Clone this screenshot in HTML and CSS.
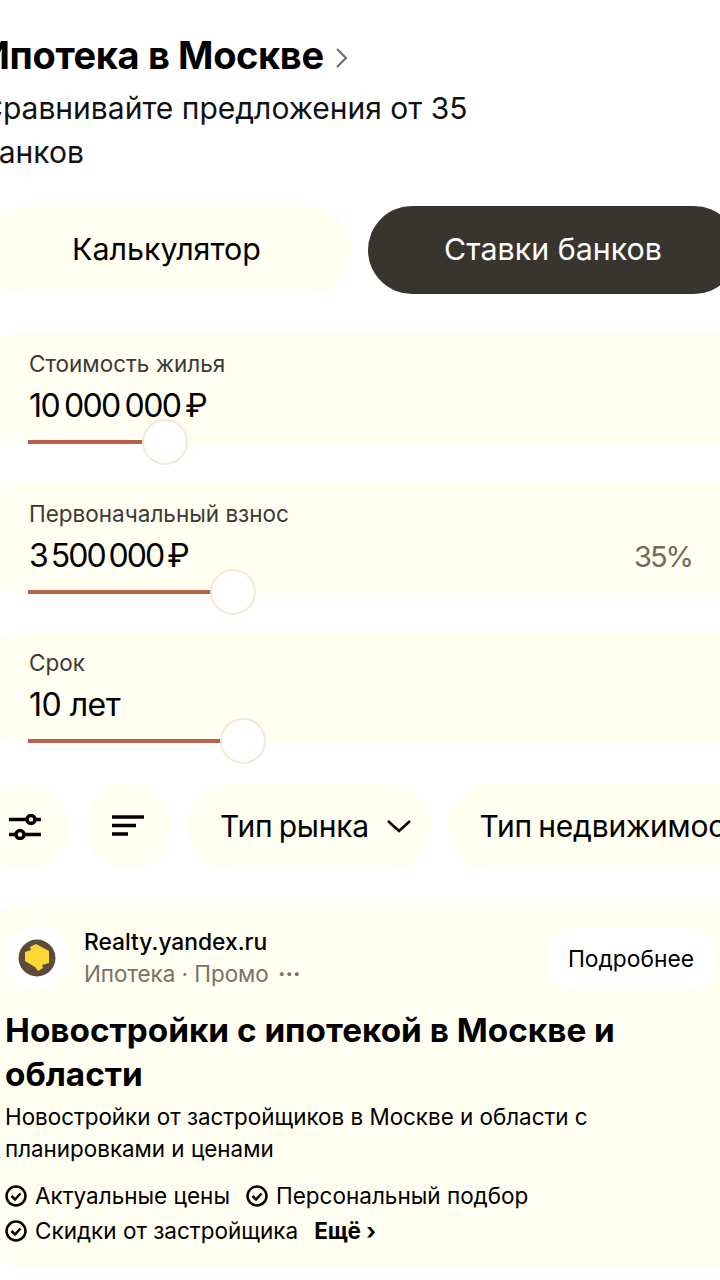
FILE: index.html
```html
<!DOCTYPE html>
<html lang="ru">
<head>
<meta charset="utf-8">
<title>Ипотека в Москве</title>
<link rel="stylesheet" href="styles.css">
</head>
<body>
<main class="page">
  <header class="head">
    <h1 class="title">Ипотека в Москве <svg class="title-arrow" width="14" height="22" viewBox="0 0 14 22"><path d="M2 2l9 9-9 9" fill="none" stroke="#6b6b66" stroke-width="2"/></svg></h1>
    <p class="sub">Сравнивайте предложения от 35<br>банков</p>
  </header>
  <div class="tabs">
    <div class="tab tab-light">Калькулятор</div>
    <div class="tab tab-dark">Ставки банков</div>
  </div>
  <section class="field">
    <div class="field-label">Стоимость жилья</div>
    <div class="field-value"><span class="num">10 000 000 ₽</span></div>
    <div class="slider"><div class="track t1"></div><div class="thumb"></div></div>
  </section>
  <section class="field">
    <div class="field-label">Первоначальный взнос</div>
    <div class="field-value"><span class="num num-tight">3 500 000 ₽</span><span class="pct">35%</span></div>
    <div class="slider"><div class="track t2"></div><div class="thumb"></div></div>
  </section>
  <section class="field">
    <div class="field-label">Срок</div>
    <div class="field-value"><span>10 лет</span></div>
    <div class="slider"><div class="track t3"></div><div class="thumb"></div></div>
  </section>
  <div class="chips">
    <div class="chip chip-round">
      <svg width="32" height="26" viewBox="0 0 32 26"><path d="M0 5.500h32M0 20.500h32" fill="none" stroke="#000" stroke-width="3.500"/><circle cx="22" cy="5.500" r="4" fill="#fffef0" stroke="#000" stroke-width="3.500"/><circle cx="11" cy="20.500" r="4" fill="#fffef0" stroke="#000" stroke-width="3.500"/></svg>
    </div>
    <div class="chip chip-round">
      <svg class="sort" width="32" height="21" viewBox="0 0 32 21"><path d="M0 2h32M0 10.500h24M0 19h16" fill="none" stroke="#000" stroke-width="3.500"/></svg>
    </div>
    <div class="chip chip-market">Тип рынка <svg class="chev" width="26" height="16" viewBox="0 0 26 16"><path d="M2 3l11 10L24 3" fill="none" stroke="#000" stroke-width="2.500"/></svg></div>
    <div class="chip">Тип недвижимости</div>
  </div>
  <article class="ad">
    <div class="ad-top">
      <div class="logo">
        <svg width="38" height="38" viewBox="0 0 38 38"><circle cx="19" cy="19" r="18.500" fill="#5d4a3a"/><path d="M18 5l13 7v12l-7 2 1 3-5 3-3-4-10-6V13l6-2-1-3z" fill="#fdd835"/></svg>
      </div>
      <div class="ad-src">
        <div class="ad-name">Realty.yandex.ru</div>
        <div class="ad-meta">Ипотека · Промо <span class="dots">···</span></div>
      </div>
      <div class="ad-more">Подробнее</div>
    </div>
    <h2 class="ad-title">Новостройки с ипотекой в Москве и области</h2>
    <p class="ad-text">Новостройки от застройщиков в Москве и области с планировками и ценами</p>
    <div class="ad-row">
      <span class="perk"><svg class="chk" width="22" height="22" viewBox="0 0 22 22"><circle cx="11" cy="11" r="9.500" fill="none" stroke="#000" stroke-width="2.500"/><path d="M6.500 11l3.500 3.500 5.500-6" fill="none" stroke="#000" stroke-width="2.500"/></svg>Актуальные цены</span>
      <span class="perk"><svg class="chk" width="22" height="22" viewBox="0 0 22 22"><circle cx="11" cy="11" r="9.500" fill="none" stroke="#000" stroke-width="2.500"/><path d="M6.500 11l3.500 3.500 5.500-6" fill="none" stroke="#000" stroke-width="2.500"/></svg>Персональный подбор</span>
    </div>
    <div class="ad-row">
      <span class="perk"><svg class="chk" width="22" height="22" viewBox="0 0 22 22"><circle cx="11" cy="11" r="9.500" fill="none" stroke="#000" stroke-width="2.500"/><path d="M6.500 11l3.500 3.500 5.500-6" fill="none" stroke="#000" stroke-width="2.500"/></svg>Скидки от застройщика</span>
      <b class="more">Ещё ›</b>
    </div>
  </article>
</main>
</body>
</html>
```
FILE: styles.css
```css
html, body {
  margin: 0;
  padding: 0;
  background: #fff;
  overflow: hidden;
  width: 720px;
  height: 1280px;
}
.page {
  font-family: "Inter", "Noto Sans", sans-serif;
  color: #000;
  width: 760px;
  margin-left: -19px;
  padding-top: 30px;
}
.title {
  margin: 0;
  font-size: 38px;
  line-height: 50px;
  font-weight: 700;
  letter-spacing: -0.37px;
}
.title-arrow { margin-left: 3px; vertical-align: 0; }
.sub {
  margin: 6px 0 0;
  font-size: 30px;
  line-height: 44px;
  color: #111;
}
.tabs {
  display: flex;
  gap: 16px;
  margin-top: 32px;
}
.tab {
  box-sizing: border-box;
  flex: none;
  height: 88px;
  padding-bottom: 3px;
  border-radius: 44px;
  display: flex;
  align-items: center;
  justify-content: center;
  font-size: 30.4px;
}
.tab-light { width: 371px; background: #fffef0; }
.tab-dark { width: 370px; background: #38342e; color: #fff; }
.field {
  box-sizing: border-box;
  height: 111px;
  margin: 39px 0 0;
  padding: 16px 0 0 48px;
  width: 790px;
  background: #fffef0;
  border-radius: 40px;
  position: relative;
}
.field + .field { margin-top: 39px; }
.field + .field + .field { margin-top: 38px; }
.field-label { font-size: 22.5px; line-height: 30px; color: #3a3a36; }
.field-value {
  display: flex;
  justify-content: space-between;
  align-items: baseline;
  width: 663px;
  font-size: 32px;
  line-height: 42px;
  margin-top: 6px;
  letter-spacing: -0.5px;
}
.num { letter-spacing: -1.6px; word-spacing: -2.5px; }
.num-tight { letter-spacing: -2px; word-spacing: -3px; }
.pct { color: #6f6b62; font-size: 29px; letter-spacing: -2px; }
.slider {
  position: absolute;
  left: 47px;
  bottom: 0;
  width: 660px;
  height: 4px;
}
.track { height: 4px; background: #b9604a; }
.t1 { width: 115px; }
.t2 { width: 183px; }
.t3 { width: 193px; }
.thumb {
  position: absolute;
  top: -21px;
  width: 46px;
  height: 46px;
  box-sizing: border-box;
  background: #fff;
  border: 2px solid #f7e7d6;
  border-radius: 50%;
}
.t1 + .thumb { left: 114px; }
.t2 + .thumb { left: 182px; }
.t3 + .thumb { left: 192px; }
.chips {
  display: flex;
  gap: 16.5px;
  margin-top: 40px;
  height: 87px;
}
.chip {
  box-sizing: border-box;
  flex: none;
  height: 87px;
  border-radius: 44px;
  background: #fffef0;
  display: flex;
  align-items: center;
  padding: 0 31px 2px;
  font-size: 30px;
  letter-spacing: -0.2px;
  word-spacing: -2px;
  white-space: nowrap;
}
.chip-round { width: 87px; padding: 0; justify-content: center; }
.chip-market { padding: 0 20px 2px 32px; }
.sort { margin-bottom: 3px; }
.chev { margin-left: 17px; }
.ad {
  box-sizing: border-box;
  margin: 32px 0 0 8px;
  width: 760px;
  height: 366px;
  padding: 24px 16px 0;
  background: #fffef0;
  border-radius: 36px;
}
.ad-top { display: flex; align-items: center; width: 711px; }
.logo {
  width: 64px;
  height: 64px;
  border-radius: 50%;
  background: #fff;
  display: flex;
  align-items: center;
  justify-content: center;
  flex: none;
}
.ad-src { margin-left: 15px; flex: 1; }
.ad-name { font-size: 22.8px; line-height: 32px; font-weight: 500; }
.ad-meta { font-size: 22.4px; line-height: 32px; color: #75736b; }
.dots { font-weight: 700; margin-left: 3px; }
.ad-more {
  height: 63px;
  padding: 0 22px;
  border-radius: 32px;
  background: #fff;
  display: flex;
  align-items: center;
  font-size: 22.8px;
}
.ad-title {
  margin: 18px 0 0;
  font-size: 33.3px;
  line-height: 44px;
  font-weight: 700;
  width: 640px;
}
.ad-text {
  margin: 5px 0 0;
  font-size: 22.4px;
  line-height: 32px;
  width: 640px;
}
.ad-row {
  display: flex;
  align-items: center;
  gap: 16px;
  height: 35px;
  font-size: 22.5px;
}
.ad-text + .ad-row { margin-top: 13px; }
.perk { display: inline-flex; align-items: center; white-space: nowrap; }
.chk { margin-right: 8px; }
.more { font-weight: 700; }
```
